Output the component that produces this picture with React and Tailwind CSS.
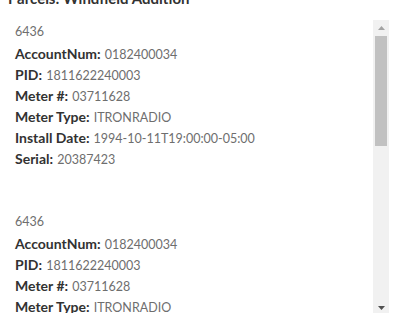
import React from "react";

const records = [
  {
    id: "6436",
    fields: [
      ["AccountNum", "0182400034"],
      ["PID", "1811622240003"],
      ["Meter #", "03711628"],
      ["Meter Type", "ITRONRADIO"],
      ["Install Date", "1994-10-11T19:00:00-05:00"],
      ["Serial", "20387423"],
    ],
  },
  {
    id: "6436",
    fields: [
      ["AccountNum", "0182400034"],
      ["PID", "1811622240003"],
      ["Meter #", "03711628"],
      ["Meter Type", "ITRONRADIO"],
      ["Install Date", "1994-10-11T19:00:00-05:00"],
      ["Serial", "20387423"],
    ],
  },
];

const Record = ({ rec }) => (
  <div className="mb-[43px]">
    <div className="text-[#6e6e6e] text-[12.5px] h-[21px]">{rec.id}</div>
    {rec.fields.map(([k, v]) => (
      <div key={k} className="h-[21px] whitespace-nowrap">
        <span className="font-bold text-[14px] text-[#323232]">{k}:</span>{" "}
        <span className="text-[12.5px] text-[#6e6e6e]">{v}</span>
      </div>
    ))}
  </div>
);

export default function App() {
  return (
    <div
      className="w-[400px] h-[313px] bg-white overflow-hidden"
      style={{ fontFamily: "Lato, 'Open Sans', sans-serif" }}
    >
      <div className="h-[20px] -mt-[12px] mb-[12px] pl-[8px] text-[15px] font-bold text-[#323232] leading-[20px] whitespace-nowrap">
        Parcels: Windfield Addition
      </div>
      <div className="flex h-[293px]">
        <div className="flex-1 overflow-hidden pl-[15px] pt-[1px] leading-[21px]">
          {records.map((r, i) => (
            <Record key={i} rec={r} />
          ))}
        </div>
        <div className="w-[16px] mr-[11px] bg-[#f1f1f1] flex flex-col">
          <div className="h-[16px] flex items-center justify-center">
            <svg width="7" height="4" viewBox="0 0 7 4">
              <path d="M3.5 0 L7 4 L0 4 Z" fill="#a3a3a3" />
            </svg>
          </div>
          <div className="h-[110px] mx-[2px] bg-[#c1c1c1]" />
          <div className="flex-1" />
          <div className="h-[14px] flex items-end justify-center pb-[3px]">
            <svg width="7" height="4" viewBox="0 0 7 4">
              <path d="M0 0 L7 0 L3.5 4 Z" fill="#505050" />
            </svg>
          </div>
        </div>
      </div>
    </div>
  );
}
